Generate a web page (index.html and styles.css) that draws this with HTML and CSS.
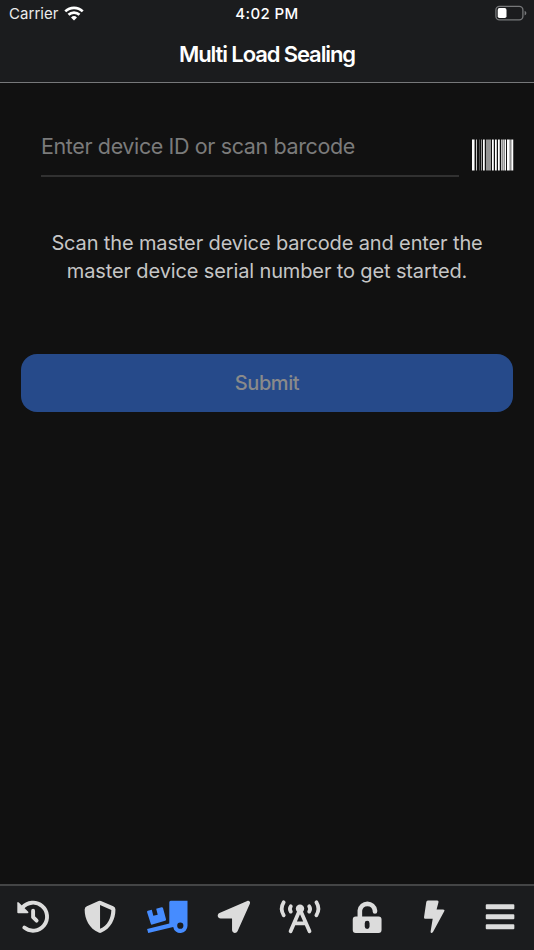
FILE: index.html
```
<!DOCTYPE html>
<html lang="en">
<head>
<meta charset="utf-8">
<title>Multi Load Sealing</title>
<link rel="stylesheet" href="styles.css">
</head>
<body>
<div class="app">
  <header class="header">
    <div class="status">
      <div class="carrier"><span class="carrier-name">Carrier</span>
        <svg class="wifi" viewBox="0 0 20 15" width="20" height="15"><g fill="none" stroke="#fff" stroke-width="2.7"><path d="M1.3 5.4a12.5 12.5 0 0 1 17.4 0"/><path d="M4.5 8.8a7.9 7.9 0 0 1 11 0"/></g><path d="M10 14.6l-3-3.1a4.3 4.3 0 0 1 6 0z" fill="#fff"/></svg>
      </div>
      <div class="time"><span>4:02 PM</span></div>
      <div class="battery"><svg viewBox="0 0 32 16" width="32" height="16"><rect x=".9" y="1.3" width="27" height="13.6" rx="3.6" fill="none" stroke="#77787a" stroke-width="1.3"/><rect x="2.7" y="3.1" width="8.8" height="10" rx="1.8" fill="#fff"/><path d="M29.6 5.7q1.8.8 1.8 2.4t-1.8 2.4z" fill="#77787a"/></svg></div>
    </div>
    <h1 class="title">Multi Load Sealing</h1>
  </header>
  <main class="content">
    <div class="entry">
      <div class="field"><span class="placeholder">Enter device ID or scan barcode</span></div>
      <svg class="barcode" viewBox="0 0 42 32" width="42" height="32"><g fill="#fff"><path d="M0 .5h2v31H0zM11 .5h1v31h-1zM20 .5h1v31h-1zM23 .5h1v31h-1zM26 .5h1v31h-1zM33 .5h1v31h-1zM35 .5h2v31h-2zM40 .5h1v31h-1z"/><path opacity=".75" d="M4 .5h1v31H4zM12 .5h1v31h-1zM21 .5h1v31h-1zM24 .5h1v31h-1zM27 .5h1v31h-1zM29 .5h1v31h-1zM31 .5h1v31h-1zM37 .5h1v31h-1zM39 .5h1v31h-1z"/><path opacity=".55" d="M2 .5h1v31H2zM9 .5h1v31H9zM14 .5h5v31h-5zM30 .5h1v31h-1zM32 .5h1v31h-1zM38 .5h1v31h-1z"/><path opacity=".25" d="M7 .5h1v31H7zM41 .5h1v31h-1z"/></g></svg>
    </div>
    <p class="hint"><span class="line1">Scan the master device barcode and enter the</span><br><span class="line2">master device serial number to get started.</span></p>
    <button class="submit" disabled><span>Submit</span></button>
  </main>
  <nav class="tabs">
    <a class="tab"><svg viewBox="0 886 66.75 64"><path d="M24.3 927.6A14 14 0 1 0 22.4 907.6M33.1 910.8v6.4l3.5 3.5" fill="none" stroke="currentColor" stroke-width="3.9" stroke-linecap="round" stroke-linejoin="round"/><path d="M17.3 903.2q0-2 1.5-.7l9.4 9.3q.9 1.4-.7 1.5h-9.2q-1 0-1-1z"/></svg></a>
    <a class="tab"><svg viewBox="67.25 886 66.75 64"><path fill-rule="evenodd" d="M98.8 901.1q1.2-.5 2.4 0l12.3 5.2q2.2.9 2.2 3.3c0 10-4.7 19-14 23q-1.4.6-2.8 0c-9.3-4-14-13-14-23q0-2.4 2.2-3.3zM100.3 905.1v23.7c7.6-3.4 11.1-10.5 11.3-18.9z"/></svg></a>
    <a class="tab active"><svg viewBox="134 886 66.75 64"><path fill-rule="evenodd" d="M170.7 900.7h16.8v25.1a7.2 7.2 0 0 1-14.3 1.2l-25 5.9-1.1-3.8 22.2-5.6v-21.3q0-1.5 1.4-1.5zM180.3 922.6a3.1 3.1 0 1 0 0 6.2 3.1 3.1 0 0 0 0-6.2z"/><path d="M147.9 910.8l3.9-1.1 1.5 6.1 4.4-1.1-1.5-6 5.3-1.5q1.2-.3 1.5.9l3 11.2q.3 1.2-.9 1.5l-12.8 3.8q-1.2.3-1.5-.9l-3.7-11.5q-.3-1 .8-1.4z"/></svg></a>
    <a class="tab"><svg viewBox="200.25 886 66.75 64"><path d="M247.5 900.9c2-.6 3.4 1 2.6 2.9l-12.2 27.3c-1.3 3-5.6 2.2-5.6-1v-11.6h-11.4c-3.2 0-4-4.2-1.2-5.5z"/></svg></a>
    <a class="tab"><svg viewBox="267 886 66.75 64"><circle cx="300" cy="908.7" r="4.2"/><path d="M300 909.5l-9.4 21.8M300 909.5l9.5 21.8M294.5 923.4h11" fill="none" stroke="currentColor" stroke-width="3.8" stroke-linecap="round"/><path d="M283.7 902.3q-4 6.5 0 13M316.4 902.3q4 6.5 0 13M290.8 906.3q-1.8 2.6 0 5.3M309.2 906.3q1.8 2.6 0 5.3" fill="none" stroke="currentColor" stroke-width="3.8" stroke-linecap="round"/></svg></a>
    <a class="tab"><svg viewBox="334.25 886 66.75 64"><path d="M360.1 918v-7.4a7.6 7.6 0 0 1 15.1 0v.8" fill="none" stroke="currentColor" stroke-width="4.6" stroke-linecap="round"/><path fill-rule="evenodd" d="M356 916.6h22.8q3 0 3 3v10.5q0 3-3 3H356q-3 0-3-3v-10.5q0-3 3-3zM367.4 920.8q-2.4 0-2.4 2.4v3.4q0 2.4 2.4 2.4t2.4-2.4v-3.4q0-2.4-2.4-2.4z"/></svg></a>
    <a class="tab"><svg viewBox="401 886 66.75 64"><path d="M427.9 900.6h9.3q1.7 0 1.3 1.7l-1.9 7.3h6.4q2.2 0 1.1 2l-11.1 20.5q-.5 1-1.6.8-1-.3-.8-1.4l2.1-12.7h-7.3q-1.6 0-1.4-1.6l2.3-15.1q.2-1.5 1.6-1.5z"/></svg></a>
    <a class="tab"><svg viewBox="467.25 886 66.75 64"><path d="M487 904.3h26.6q1 0 1 1v2.9q0 1-1 1H487q-1 0-1-1v-2.9q0-1 1-1zm0 10h26.6q1 0 1 1v2.9q0 1-1 1H487q-1 0-1-1v-2.9q0-1 1-1zm0 10h26.6q1 0 1 1v2.9q0 1-1 1H487q-1 0-1-1v-2.9q0-1 1-1z"/></svg></a>
  </nav>
</div>
</body>
</html>
```
FILE: styles.css
```
* { box-sizing: border-box; }
body { margin: 0; background: #111; font-family: Inter, "Liberation Sans", sans-serif; }
.app { width: 534px; height: 950px; display: flex; flex-direction: column; background: #111; }
.header { height: 83px; background: #1b1c1e; border-bottom: 1px solid #77787a; color: #fff; }
.status { height: 28px; display: grid; grid-template-columns: 1fr 1fr 1fr; align-items: center; padding: 0 7px 0 9px; font-size: 15px; line-height: 28px; }
.carrier { display: flex; align-items: center; gap: 5px; color: #ececec; }
.carrier-name { letter-spacing: .05px; }
.wifi { margin-top: -2px; }
.time { text-align: center; font-weight: 500; letter-spacing: .4px; padding-right: 2px; }
.battery { display: flex; justify-content: flex-end; margin-top: -2px; }
.title { margin: 0; text-align: center; font-size: 22px; line-height: 52px; font-weight: 600; letter-spacing: -1.1px; }
.content { flex: 1; padding: 46px 20px 0 21px; }
.entry { display: flex; gap: 13px; padding-left: 20px; height: 48px; }
.field { width: 418px; height: 48px; border-bottom: 2px solid #313131; color: #7b7b7b; font-size: 21.5px; line-height: 34px; letter-spacing: -.38px; white-space: nowrap; }
.barcode { margin-top: 10px; flex: none; }
.hint { margin: 52px 1px 0 0; text-align: center; color: #c6c6c6; font-size: 20px; line-height: 28px; letter-spacing: -.13px; white-space: nowrap; }
.submit { display: block; width: 492px; height: 58px; margin: 69px 0 0; padding: 1px 0 0; border: 0; border-radius: 16px; background: #264a8a; color: #8a8a8a; font: 500 20px/57px Inter, "Liberation Sans", sans-serif; letter-spacing: -.4px; }
.tabs { height: 66px; display: flex; background: #1b1c1e; border-top: 2px solid #444546; }
.tab { flex: 1; color: #dcdcdc; }
.tab svg { display: block; width: 100%; height: 64px; fill: currentColor; }
.tab.active { color: #468cff; }
```
